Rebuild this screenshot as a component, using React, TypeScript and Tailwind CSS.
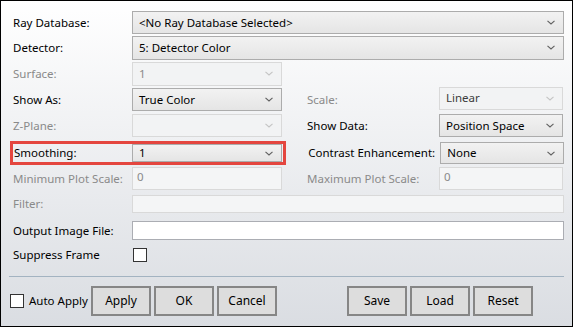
import React from 'react'

const font = { fontFamily: '"Noto Sans", "Open Sans", sans-serif' }

function Chevron({ disabled }: { disabled?: boolean }) {
  return (
    <svg width="8" height="5" viewBox="0 0 8 5" className="shrink-0">
      <path d="M0.5 0.8 L4 4 L7.5 0.8" fill="none" stroke={disabled ? '#c4c4c4' : '#606060'} strokeWidth="1.1" />
    </svg>
  )
}

function Combo({ value, disabled, className = '', textClass = '' }: { value: string; disabled?: boolean; className?: string; textClass?: string }) {
  return (
    <div
      className={`flex items-center justify-between pl-[6px] pr-[8px] border ${
        disabled ? 'bg-[#f2f3f4] border-[#d9d9d9]' : 'bg-gradient-to-b from-[#f2f2f2] to-[#e5e5e5] border-[#acacac]'
      } ${className}`}
    >
      <span className={`leading-none ${disabled ? 'text-[#8a8a8a]' : 'text-black'} ${textClass}`}>{value}</span>
      <Chevron disabled={disabled} />
    </div>
  )
}

function TextBox({ value, disabled, className = '' }: { value?: string; disabled?: boolean; className?: string }) {
  return (
    <div className={`border pl-[4px] pt-[1px] leading-[16px] ${disabled ? 'bg-[#f4f5f6] border-[#d9d9d9] text-[#8a8a8a]' : 'bg-white border-[#abadb3]'} ${className}`}>
      {value}
    </div>
  )
}

function Label({ text, disabled, className = '' }: { text: string; disabled?: boolean; className?: string }) {
  return <div className={`shrink-0 ${disabled ? 'text-[#8a8a8a]' : 'text-black'} ${className}`}>{text}</div>
}

function Button({ text }: { text: string }) {
  return (
    <div className="w-[60px] h-[30px] flex items-center justify-center bg-[#dddddd] border-2 border-[#868686] text-black text-[12px]">
      {text}
    </div>
  )
}

export default function App() {
  return (
    <div
      className="w-[573px] h-[327px] border border-black bg-gradient-to-b from-white to-[#dadde2] text-[11.5px] overflow-hidden"
      style={font}
    >
      <div className="pl-[12px] pr-[8px] flex flex-col">
        {/* Ray Database */}
        <div className="mt-[10px] h-[23px] flex items-center">
          <Label text="Ray Database:" className="w-[119px]" />
          <Combo value="<No Ray Database Selected>" className="w-[432px] h-[23px]" />
        </div>

        {/* Detector */}
        <div className="mt-[2px] h-[23px] flex items-center">
          <Label text="Detector:" className="w-[119px]" />
          <Combo value="5: Detector Color" className="w-[432px] h-[24px]" />
        </div>

        {/* Surface */}
        <div className="mt-[3px] h-[23px] flex items-center">
          <Label text="Surface:" disabled className="w-[119px]" />
          <Combo value="1" disabled className="w-[150px] h-[24px]" />
        </div>

        {/* Show As / Scale */}
        <div className="mt-[3px] h-[23px] flex items-center">
          <Label text="Show As:" className="w-[119px]" />
          <Combo value="True Color" className="w-[150px] h-[23px]" />
          <Label text="Scale:" disabled className="w-[132px] ml-[25px]" />
          <Combo value="Linear" disabled textClass="!text-[#3c3c3c]" className="w-[124px] h-[23px] -mt-[3px]" />
        </div>

        {/* Z-Plane / Show Data */}
        <div className="mt-[3px] h-[23px] flex items-center">
          <Label text="Z-Plane:" disabled className="w-[119px]" />
          <Combo value="" disabled className="w-[150px] h-[23px]" />
          <Label text="Show Data:" className="w-[132px] ml-[25px]" />
          <Combo value="Position Space" className="w-[124px] h-[23px]" />
        </div>

        {/* Smoothing / Contrast */}
        <div className="mt-[5px] h-[22px] flex items-center">
          <div className="flex items-center h-[18px] outline-[3px] outline-solid outline-[#e4463f] w-[271px]">
            <Label text="Smoothing:" className="w-[119px] pl-[1px]" />
            <Combo value="1" className="w-[150px] h-[18px]" />
          </div>
          <Label text="Contrast Enhancement:" className="w-[132px] ml-[25px]" />
          <Combo value="None" className="w-[124px] h-[22px]" />
        </div>

        {/* Min / Max Plot Scale */}
        <div className="mt-[3px] h-[23px] flex items-center">
          <Label text="Minimum Plot Scale:" disabled className="w-[119px]" />
          <TextBox value="0" disabled className="w-[150px] h-[23px]" />
          <Label text="Maximum Plot Scale:" disabled className="w-[132px] ml-[25px]" />
          <TextBox value="0" disabled className="w-[124px] h-[23px]" />
        </div>

        {/* Filter */}
        <div className="mt-[5px] h-[18px] flex items-center">
          <Label text="Filter:" disabled className="w-[119px]" />
          <TextBox disabled className="w-[432px] h-[18px]" />
        </div>

        {/* Output Image File */}
        <div className="mt-[8px] h-[19px] flex items-center">
          <Label text="Output Image File:" className="w-[119px]" />
          <TextBox className="w-[432px] h-[19px]" />
        </div>

        {/* Suppress Frame */}
        <div className="mt-[8px] h-[14px] flex items-center">
          <Label text="Suppress Frame" className="w-[120px]" />
          <div className="w-[14px] h-[14px] bg-white border border-[#333333]" />
        </div>
      </div>

      {/* Separator */}
      <div className="mt-[14px] ml-[8px] mr-[8px] h-px bg-[#a3b3c1]" />

      {/* Buttons */}
      <div className="mt-[9px] flex items-center">
        <div className="w-[81px] ml-[9px] flex items-center">
          <div className="w-[14px] h-[14px] bg-white border border-[#333333]" />
          <span className="ml-[5px] text-black">Auto Apply</span>
        </div>
        <div className="flex gap-[3px]">
          <Button text="Apply" />
          <Button text="OK" />
          <Button text="Cancel" />
        </div>
        <div className="flex gap-[3px] ml-[70px]">
          <Button text="Save" />
          <Button text="Load" />
          <Button text="Reset" />
        </div>
      </div>
    </div>
  )
}
